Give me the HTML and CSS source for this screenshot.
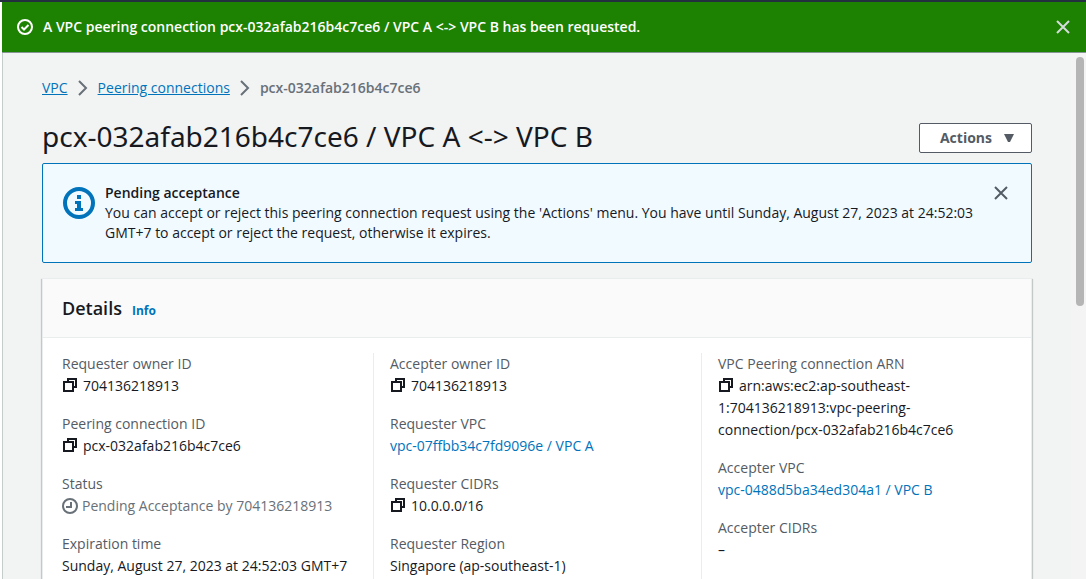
FILE: index.html
```html
<!DOCTYPE html>
<html lang="en">
<head>
<meta charset="utf-8">
<title>Peering connection details</title>
<link rel="stylesheet" href="styles.css">
</head>
<body>
<svg class="sprite" aria-hidden="true">
  <symbol id="copy" viewBox="0 0 14 14"><path d="M5 4V1h8v8h-3M1 4h9v9H1z" fill="none" stroke="currentColor" stroke-width="2"/></symbol>
  <symbol id="close" viewBox="0 0 14 14"><path d="M1 1l12 12M13 1L1 13" fill="none" stroke="currentColor" stroke-width="2"/></symbol>
  <symbol id="chevron" viewBox="0 0 10 16"><path d="M1 1l7 7-7 7" fill="none" stroke="currentColor" stroke-width="2"/></symbol>
</svg>
<div class="app">
  <div class="flash" role="status">
    <svg class="icon-status" viewBox="0 0 16 16" aria-hidden="true"><circle cx="8" cy="8" r="7" fill="none" stroke="currentColor" stroke-width="2"/><path d="M4.5 8l2.5 2.500 4.500-4.500" fill="none" stroke="currentColor" stroke-width="2"/></svg>
    <p class="flash-text">A VPC peering connection pcx-032afab216b4c7ce6 / VPC A &lt;-&gt; VPC B has been requested.</p>
    <button class="close close-light" type="button" aria-label="Dismiss notification"><svg class="icon"><use href="#close"/></svg></button>
  </div>
  <div class="body">
    <main class="content">
      <nav class="crumbs" aria-label="Breadcrumbs">
        <a href="#">VPC</a>
        <svg class="chevron" aria-hidden="true"><use href="#chevron"/></svg>
        <a href="#">Peering connections</a>
        <svg class="chevron" aria-hidden="true"><use href="#chevron"/></svg>
        <span class="crumb-current">pcx-032afab216b4c7ce6</span>
      </nav>
      <header class="page-header">
        <h1 class="title">pcx-032afab216b4c7ce6 / VPC A &lt;-&gt; VPC B</h1>
        <button class="actions" type="button">Actions <svg class="caret" viewBox="0 0 10 8" aria-hidden="true"><path d="M0 0h10L6 8H4z" fill="currentColor"/></svg></button>
      </header>
      <section class="alert">
        <svg class="icon-info" viewBox="0 0 32 32" aria-hidden="true"><circle cx="16" cy="16" r="14" fill="none" stroke="currentColor" stroke-width="4"/><path d="M14 8h4v4h-4zM12 14h6v7h2v3h-8v-3h2v-4h-2z" fill="currentColor"/></svg>
        <div class="alert-body">
          <h2 class="alert-title">Pending acceptance</h2>
          <p class="alert-text">You can accept or reject this peering connection request using the 'Actions' menu. You have until Sunday, August 27, 2023 at 24:52:03 GMT+7 to accept or reject the request, otherwise it expires.</p>
        </div>
        <button class="close" type="button" aria-label="Dismiss alert"><svg class="icon"><use href="#close"/></svg></button>
      </section>
      <section class="card">
        <header class="card-header">
          <h2 class="card-title">Details</h2>
          <a class="info" href="#">Info</a>
        </header>
        <div class="columns">
          <dl class="column">
            <div class="field"><dt>Requester owner ID</dt><dd><button class="copy" type="button" aria-label="Copy"><svg class="icon"><use href="#copy"/></svg></button>704136218913</dd></div>
            <div class="field"><dt>Peering connection ID</dt><dd><button class="copy" type="button" aria-label="Copy"><svg class="icon"><use href="#copy"/></svg></button>pcx-032afab216b4c7ce6</dd></div>
            <div class="field"><dt>Status</dt><dd class="pending"><svg class="icon-status" viewBox="0 0 16 16" aria-hidden="true"><circle cx="8" cy="8" r="7" fill="none" stroke="currentColor" stroke-width="2"/><path d="M9 4v5H4" fill="none" stroke="currentColor" stroke-width="2"/></svg>Pending Acceptance by 704136218913</dd></div>
            <div class="field"><dt>Expiration time</dt><dd>Sunday, August 27, 2023 at 24:52:03 GMT+7</dd></div>
          </dl>
          <dl class="column">
            <div class="field"><dt>Accepter owner ID</dt><dd><button class="copy" type="button" aria-label="Copy"><svg class="icon"><use href="#copy"/></svg></button>704136218913</dd></div>
            <div class="field"><dt>Requester VPC</dt><dd><a href="#">vpc-07ffbb34c7fd9096e / VPC A</a></dd></div>
            <div class="field"><dt>Requester CIDRs</dt><dd><button class="copy" type="button" aria-label="Copy"><svg class="icon"><use href="#copy"/></svg></button>10.0.0.0/16</dd></div>
            <div class="field"><dt>Requester Region</dt><dd>Singapore (ap-southeast-1)</dd></div>
          </dl>
          <dl class="column">
            <div class="field"><dt>VPC Peering connection ARN</dt><dd><button class="copy" type="button" aria-label="Copy"><svg class="icon"><use href="#copy"/></svg></button>arn:aws:ec2:ap-southeast-<wbr>1:704136218913:vpc-peering-<wbr><span class="keep">connection/pcx-032afab216b4c7ce6</span></dd></div>
            <div class="field"><dt>Accepter VPC</dt><dd><a href="#">vpc-0488d5ba34ed304a1 / VPC B</a></dd></div>
            <div class="field"><dt>Accepter CIDRs</dt><dd>–</dd></div>
          </dl>
        </div>
      </section>
    </main>
    <div class="scroll-track" aria-hidden="true"><div class="scroll-thumb"></div></div>
  </div>
</div>
</body>
</html>
```
FILE: styles.css
```css
* { box-sizing: border-box; }
body {
  margin: 0;
  background: #fff;
  color: #16191f;
  font: 14px/22px "Open Sans", "Noto Sans", sans-serif;
}
h1, h2, p, dl, dt, dd { margin: 0; }
a { color: #0073bb; text-decoration: none; }
button { font: inherit; color: inherit; cursor: pointer; }
.sprite { display: none; }
.app {
  display: flex;
  flex-direction: column;
  height: 100vh;
  overflow: hidden;
  border-top: 2px solid #232f3e;
  padding-left: 2px;
}
.flash {
  display: flex;
  flex: none;
  align-items: center;
  min-height: 51px;
  padding: 0 16px 0 15px;
  background: #1d8102;
  border-bottom: 1px solid #879596;
  color: #fff;
}
.flash-text { flex: 1; margin-left: 10px; font-weight: 600; }
.icon-status { flex: none; width: 16px; height: 16px; }
.icon { display: block; width: 14px; height: 14px; }
.close {
  flex: none;
  align-self: flex-start;
  padding: 0;
  border: 0;
  background: none;
  color: #545b64;
}
.close-light { align-self: center; color: #d5dbdb; }
.body { display: flex; flex: 1; min-height: 0; background: #f2f3f3; }
.content {
  flex: 1;
  min-width: 0;
  overflow: hidden;
  padding: 24px 39px 0;
  border-left: 1px solid #c4cccc;
}
.crumbs { display: flex; align-items: center; gap: 10px; }
.crumbs a { text-decoration: underline; }
.crumb-current { color: #687078; font-weight: 600; }
.chevron { width: 10px; height: 16px; color: #687078; }
.page-header {
  display: flex;
  align-items: flex-end;
  justify-content: space-between;
  margin: 20px 0 10px;
}
.title { font: 400 28px/34px "Noto Sans", "Open Sans", sans-serif; }
.actions {
  display: flex;
  align-items: center;
  gap: 12px;
  height: 30px;
  padding: 0 17px 0 20px;
  border: 1px solid #545b64;
  border-radius: 2px;
  background: #fff;
  color: #545b64;
  font-weight: 700;
}
.caret { width: 10px; height: 8px; }
.alert {
  display: flex;
  gap: 10px;
  padding: 19px 23px 19px 20px;
  border: 1px solid #0073bb;
  border-radius: 2px;
  background: #f1faff;
  line-height: 20px;
}
.icon-info { flex: none; width: 32px; height: 32px; margin-top: 4px; color: #0073bb; }
.alert-body { flex: 1; padding-right: 10px; }
.alert-title { font-size: 14px; line-height: 20px; font-weight: 600; }
.alert .close { margin-top: 3px; }
.card {
  margin-top: 15px;
  border: 1px solid #eaeded;
  background: #fff;
  box-shadow: 0 1px 1px rgba(0, 28, 36, 0.3), 1px 1px 1px rgba(0, 28, 36, 0.15), -1px 1px 1px rgba(0, 28, 36, 0.15);
}
.card-header {
  display: flex;
  align-items: baseline;
  gap: 10px;
  padding: 18px 19px 16px;
  border-bottom: 1px solid #eaeded;
  background: #fafafa;
}
.card-title { font-size: 18px; line-height: 22px; font-weight: 600; }
.info { font-size: 12px; line-height: 20px; font-weight: 700; }
.columns {
  display: grid;
  grid-template-columns: repeat(3, 1fr);
  padding: 15px 2px;
}
.column {
  display: flex;
  flex-direction: column;
  gap: 16px;
  min-width: 0;
  padding: 0 16px 16px;
  border-left: 1px solid #eaeded;
}
.column:first-child { border-left-color: transparent; }
.field dt { color: #545b64; }
.field .pending { display: flex; align-items: center; gap: 4px; color: #687078; }
.keep { white-space: nowrap; }
.copy {
  display: inline-block;
  margin: 0 6px 0 1px;
  padding: 0;
  border: 0;
  background: none;
  vertical-align: -1px;
}
.scroll-track { flex: none; width: 15px; padding: 4px 2px 4px 5px; background: #f4f4f4; }
.scroll-thumb { height: 48%; border-radius: 4px; background: #b5b5b5; }
```
